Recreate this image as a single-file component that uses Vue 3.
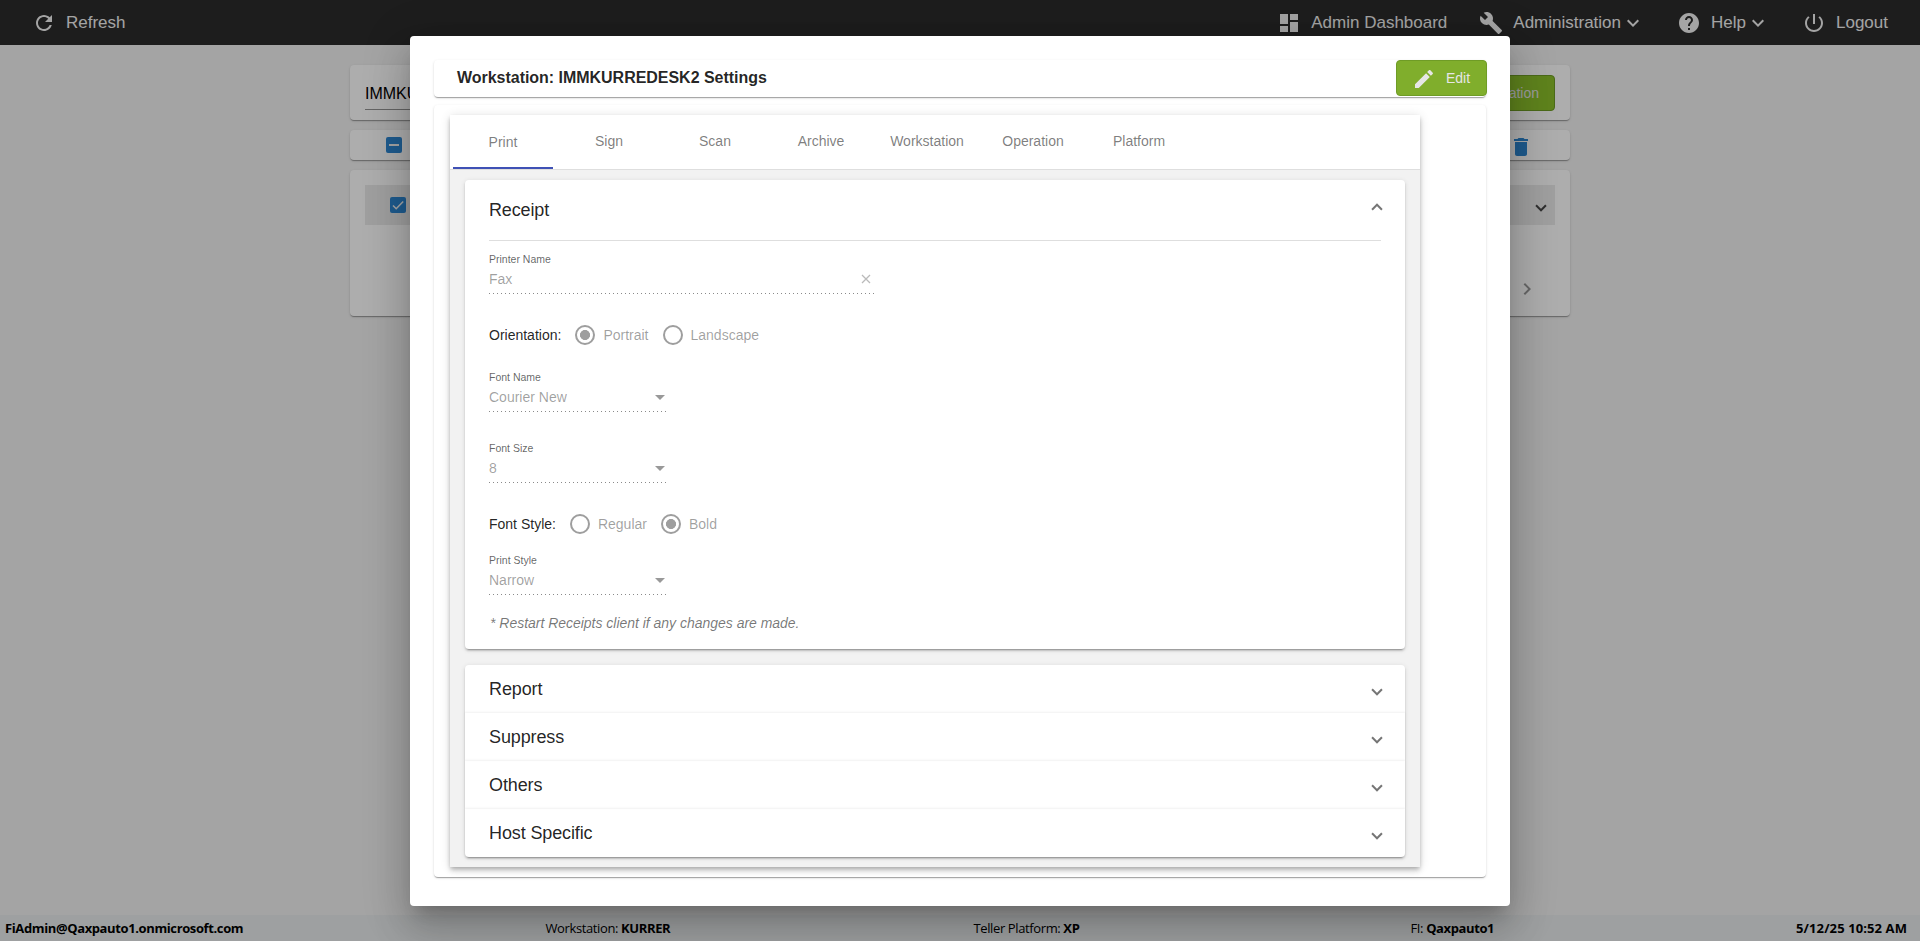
<script setup>
    import { ref } from 'vue';

    const tabs = ['Print', 'Sign', 'Scan', 'Archive', 'Workstation', 'Operation', 'Platform'];
    const activeTab = ref('Print');

    const closedPanels = ['Report', 'Suppress', 'Others', 'Host Specific'];

    const selects = {
        fontName: { label: 'Font Name', value: 'Courier New' },
        fontSize: { label: 'Font Size', value: '8' },
        printStyle: { label: 'Print Style', value: 'Narrow' },
    };

    const orientation = ref('Portrait');
    const fontStyle = ref('Bold');
</script>

<template>
    <div class="page">
        <header class="toolbar">
            <a class="nav-item">
                <svg class="icon" viewBox="0 0 24 24"><path d="M17.65 6.35C16.2 4.9 14.21 4 12 4c-4.42 0-7.99 3.58-7.99 8s3.57 8 7.99 8c3.73 0 6.84-2.55 7.73-6h-2.08c-.82 2.33-3.04 4-5.65 4-3.31 0-6-2.69-6-6s2.69-6 6-6c1.66 0 3.14.69 4.22 1.78L13 11h7V4l-2.35 2.35z" /></svg>
                <span>Refresh</span>
            </a>
            <nav class="nav-right">
                <a class="nav-item">
                    <svg class="icon" viewBox="0 0 24 24"><path d="M3 13h8V3H3v10zm0 8h8v-6H3v6zm10 0h8V11h-8v10zm0-18v6h8V3h-8z" /></svg>
                    <span>Admin Dashboard</span>
                </a>
                <a class="nav-item">
                    <svg class="icon" viewBox="0 0 24 24"><path d="M22.7 19l-9.1-9.1c.9-2.3.4-5-1.5-6.9-2-2-5-2.4-7.4-1.3L9 6 6 9 1.6 4.7C.4 7.1.9 10.1 2.9 12.1c1.9 1.9 4.6 2.4 6.9 1.5l9.1 9.1c.4.4 1 .4 1.4 0l2.3-2.3c.5-.4.5-1.1.1-1.4z" /></svg>
                    <span>Administration</span>
                    <svg class="icon more" viewBox="0 0 24 24"><path d="M16.59 8.59L12 13.17 7.41 8.59 6 10l6 6 6-6z" /></svg>
                </a>
                <a class="nav-item">
                    <svg class="icon" viewBox="0 0 24 24"><path d="M12 2C6.48 2 2 6.48 2 12s4.48 10 10 10 10-4.48 10-10S17.52 2 12 2zm1 17h-2v-2h2v2zm2.07-7.75l-.9.92C13.45 12.9 13 13.5 13 15h-2v-.5c0-1.1.45-2.1 1.17-2.83l1.24-1.26c.37-.36.59-.86.59-1.41 0-1.1-.9-2-2-2s-2 .9-2 2H8c0-2.21 1.79-4 4-4s4 1.79 4 4c0 .88-.36 1.68-.93 2.25z" /></svg>
                    <span>Help</span>
                    <svg class="icon more" viewBox="0 0 24 24"><path d="M16.59 8.59L12 13.17 7.41 8.59 6 10l6 6 6-6z" /></svg>
                </a>
                <a class="nav-item">
                    <svg class="icon" viewBox="0 0 24 24"><path d="M13 3h-2v10h2V3zm4.83 2.17l-1.42 1.42C17.99 7.86 19 9.81 19 12c0 3.87-3.13 7-7 7s-7-3.13-7-7c0-2.19 1.01-4.14 2.58-5.42L6.17 5.17C4.23 6.82 3 9.26 3 12c0 4.97 4.03 9 9 9s9-4.03 9-9c0-2.74-1.23-5.18-3.17-6.83z" /></svg>
                    <span>Logout</span>
                </a>
            </nav>
        </header>

        <main class="content">
            <div class="card search-card">
                <div class="search-input">IMMKURREDESK2</div>
                <button class="btn add-btn">Add Workstation</button>
            </div>
            <div class="card actions-card">
                <span class="checkbox">
                    <svg viewBox="0 0 16 16"><path d="M3 8h10" stroke-width="2" /></svg>
                </span>
                <svg class="icon trash" viewBox="0 0 24 24"><path d="M6 19c0 1.100.9 2 2 2h8c1.100 0 2-.9 2-2V7H6v12zM19 4h-3.500l-1-1h-5l-1 1H5v2h14V4z" /></svg>
            </div>
            <div class="card list-card">
                <div class="list-row">
                    <span class="checkbox">
                        <svg viewBox="0 0 16 16"><path d="M3 8.500l3.200 3.200L13.200 4.500" stroke-width="1.600" /></svg>
                    </span>
                    <span class="indicator dark"></span>
                </div>
                <svg class="icon next" viewBox="0 0 24 24"><path d="M10 6L8.590 7.410 13.170 12l-4.580 4.590L10 18l6-6z" /></svg>
            </div>
        </main>

        <footer class="status-bar">
            <span class="user"><b>FiAdmin@Qaxpauto1.onmicrosoft.com</b></span>
            <span class="station">Workstation: <b>KURRER</b></span>
            <span class="platform">Teller Platform: <b>XP</b></span>
            <span class="fi">FI: <b>Qaxpauto1</b></span>
            <span class="date"><b>5/12/25 10:52 AM</b></span>
        </footer>

        <div class="overlay">
            <div class="dialog" role="dialog" aria-labelledby="dialog-title">
                <div class="card title-card">
                    <h2 id="dialog-title">Workstation: IMMKURREDESK2 Settings</h2>
                    <button class="btn edit-btn">
                        <svg class="icon" viewBox="0 0 24 24"><path d="M3 17.250V21h3.750L17.810 9.940l-3.750-3.750L3 17.250zM20.710 7.040c.39-.39.39-1.020 0-1.410l-2.340-2.340c-.39-.39-1.020-.39-1.410 0l-1.830 1.830 3.750 3.750 1.830-1.830z" /></svg>
                        <span>Edit</span>
                    </button>
                </div>

                <div class="card body-card">
                    <div class="tab-group">
                        <div class="tab-header">
                            <div
                                v-for="tab in tabs"
                                :key="tab"
                                class="tab"
                                :class="{ active: tab === activeTab }"
                                @click="activeTab = tab"
                            >
                                {{ tab }}
                            </div>
                        </div>

                        <div class="tab-body">
                            <section class="panel receipt">
                                <div class="panel-title">
                                    <span>Receipt</span>
                                    <span class="indicator up"></span>
                                </div>

                                <div class="field printer">
                                    <label>Printer Name</label>
                                    <div class="value">
                                        <span>Fax</span>
                                        <svg class="clear" viewBox="0 0 10 10"><path d="M1 1l8 8M9 1L1 9" /></svg>
                                    </div>
                                </div>

                                <div class="radio-row orientation">
                                    <span class="radio-label">Orientation:</span>
                                    <span v-for="option in ['Portrait', 'Landscape']" :key="option" class="radio">
                                        <i class="circle" :class="{ checked: option === orientation }"></i>{{ option }}
                                    </span>
                                </div>

                                <div class="field font-name">
                                    <label>{{ selects.fontName.label }}</label>
                                    <div class="value"><span>{{ selects.fontName.value }}</span><i class="arrow"></i></div>
                                </div>
                                <div class="field font-size">
                                    <label>{{ selects.fontSize.label }}</label>
                                    <div class="value"><span>{{ selects.fontSize.value }}</span><i class="arrow"></i></div>
                                </div>

                                <div class="radio-row">
                                    <span class="radio-label">Font Style:</span>
                                    <span v-for="option in ['Regular', 'Bold']" :key="option" class="radio">
                                        <i class="circle" :class="{ checked: option === fontStyle }"></i>{{ option }}
                                    </span>
                                </div>

                                <div class="field print-style">
                                    <label>{{ selects.printStyle.label }}</label>
                                    <div class="value"><span>{{ selects.printStyle.value }}</span><i class="arrow"></i></div>
                                </div>

                                <p class="note">* Restart Receipts client if any changes are made.</p>
                            </section>

                            <section class="panel">
                                <div v-for="name in closedPanels" :key="name" class="closed-row">
                                    <span>{{ name }}</span>
                                    <span class="indicator"></span>
                                </div>
                            </section>
                        </div>
                    </div>
                </div>
            </div>
        </div>
    </div>
</template>

<style>
    body {
        margin: 0;
        overflow: hidden;
    }
</style>

<style scoped>
    * {
        box-sizing: border-box;
    }

    .page {
        display: flex;
        flex-direction: column;
        height: 100vh;
        background: #f2f2f2;
        font-family: "Liberation Sans", Arial, sans-serif;
        font-size: 14px;
        color: rgba(0, 0, 0, 0.87);
    }

    .icon {
        width: 24px;
        height: 24px;
        flex: none;
        fill: currentColor;
    }

    .toolbar {
        display: flex;
        justify-content: space-between;
        height: 45px;
        padding: 0 32px;
        background: #2b2b2b;
        color: #f2f2f2;
        font-size: 17px;
    }

    .nav-right {
        display: flex;
        gap: 32px;
    }

    .nav-item {
        display: flex;
        align-items: center;
        gap: 10px;
    }

    .nav-item .more {
        margin-left: -10px;
    }

    .card {
        background: #fff;
        border-radius: 4px;
        box-shadow: 0 2px 1px -1px rgba(0, 0, 0, 0.2), 0 1px 1px 0 rgba(0, 0, 0, 0.14), 0 1px 3px 0 rgba(0, 0, 0, 0.12);
    }

    .content {
        flex: 1;
        display: flex;
        flex-direction: column;
        gap: 10px;
        width: 1220px;
        margin: 0 auto;
        padding-top: 20px;
    }

    .search-card {
        display: flex;
        justify-content: space-between;
        height: 55px;
        padding: 10px 15px;
    }

    .search-input {
        width: 300px;
        height: 35px;
        padding-top: 10px;
        border-bottom: 1px solid rgba(0, 0, 0, 0.42);
        font-size: 16px;
        line-height: 18px;
        color: #000;
    }

    .btn {
        display: flex;
        align-items: center;
        height: 36px;
        border: 1px solid #6f9c26;
        border-radius: 4px;
        background: #80ae2c;
        color: #e6e6e6;
        font: 14px "Liberation Sans", Arial, sans-serif;
    }

    .add-btn {
        padding: 0 15px;
        background: #8cc22c;
    }

    .actions-card {
        display: flex;
        align-items: center;
        justify-content: space-between;
        height: 30px;
        padding: 0 37.5px 0 36px;
    }

    .trash {
        color: #2d86d2;
        margin-top: 4px;
    }

    .checkbox {
        width: 16px;
        height: 16px;
        border-radius: 2px;
        background: #2d86d2;
    }

    .checkbox svg {
        display: block;
        fill: none;
        stroke: #f2f2f2;
    }

    .list-card {
        display: flex;
        flex-direction: column;
        height: 146px;
        padding: 15px;
    }

    .list-row {
        display: flex;
        align-items: center;
        justify-content: space-between;
        height: 40px;
        padding: 0 10px 0 25px;
        margin-bottom: 52px;
        background: #ebebeb;
    }

    .next {
        align-self: flex-end;
        margin-right: 16px;
        color: rgba(0, 0, 0, 0.4);
    }

    .indicator {
        width: 8px;
        height: 8px;
        margin-top: 2px;
        border: solid rgba(0, 0, 0, 0.54);
        border-width: 0 2px 2px 0;
        transform: rotate(45deg);
    }

    .indicator.dark {
        border-color: rgba(0, 0, 0, 0.7);
    }

    .indicator.up {
        margin-top: -1px;
        transform: rotate(225deg);
    }

    .status-bar {
        display: grid;
        grid-template-columns: 540.5px 428px 437px 1fr auto;
        align-items: center;
        height: 26px;
        padding: 0 13px 0 5px;
        background: #e9ecee;
        color: #000;
        font: 13px "Open Sans", "Noto Sans", sans-serif;
        letter-spacing: -0.38px;
    }

    .status-bar .date {
        letter-spacing: 0.1px;
    }

    .overlay {
        position: absolute;
        inset: 0;
        display: flex;
        align-items: center;
        justify-content: center;
        background: rgba(0, 0, 0, 0.32);
    }

    .dialog {
        width: 1100px;
        height: 870px;
        padding: 24px;
        border-radius: 4px;
        background: #fff;
        box-shadow: 0 11px 15px -7px rgba(0, 0, 0, 0.2), 0 24px 38px 3px rgba(0, 0, 0, 0.14), 0 9px 46px 8px rgba(0, 0, 0, 0.12);
    }

    .title-card {
        display: flex;
        justify-content: space-between;
        height: 37px;
        padding-left: 23px;
        margin-bottom: 8px;
    }

    .title-card h2 {
        margin: 0;
        font-size: 16px;
        line-height: 35px;
        letter-spacing: -0.03px;
    }

    .edit-btn {
        gap: 10px;
        width: 91px;
        margin-right: -1px;
        padding: 0 15px;
    }

    .edit-btn .icon {
        margin-top: 2px;
    }

    .body-card {
        height: 772px;
        padding: 10px 16px;
    }

    .tab-group {
        width: 970px;
        height: 752px;
        background: #f2f2f2;
        box-shadow: 0 2px 4px -1px rgba(0, 0, 0, 0.2), 0 4px 5px 0 rgba(0, 0, 0, 0.14), 0 1px 10px 0 rgba(0, 0, 0, 0.12);
    }

    .tab-header {
        display: flex;
        gap: 6px;
        height: 55px;
        padding: 0 3px;
        background: #fff;
        border-bottom: 1px solid #dedede;
    }

    .tab {
        width: 100px;
        padding-bottom: 2px;
        text-align: center;
        line-height: 52px;
        color: rgba(0, 0, 0, 0.52);
    }

    .tab.active {
        padding-bottom: 0;
        line-height: 54px;
        border-bottom: 2px solid #3f51b5;
    }

    .tab-body {
        display: flex;
        flex-direction: column;
        gap: 16px;
        padding: 10px 15px;
    }

    .panel {
        background: #fff;
        border-radius: 4px;
        box-shadow: 0 3px 1px -2px rgba(0, 0, 0, 0.2), 0 2px 2px 0 rgba(0, 0, 0, 0.14), 0 1px 5px 0 rgba(0, 0, 0, 0.12);
    }

    .receipt {
        height: 469px;
        padding: 0 24px;
    }

    .panel-title {
        display: flex;
        align-items: center;
        justify-content: space-between;
        height: 61px;
        border-bottom: 1px solid #dedede;
        font-size: 18px;
        letter-spacing: -0.15px;
    }

    .panel-title span:first-child,
    .closed-row span:first-child {
        padding-top: 2px;
    }

    .field {
        width: 178px;
        height: 42px;
    }

    .field label {
        display: block;
        height: 14px;
        font-size: 10.5px;
        line-height: 14px;
        color: rgba(0, 0, 0, 0.62);
    }

    .field .value {
        display: flex;
        align-items: center;
        justify-content: space-between;
        height: 28px;
        padding: 0 2px 2px 0;
        color: rgba(0, 0, 0, 0.38);
        background: repeating-linear-gradient(to right, rgba(0, 0, 0, 0.46) 0 1px, transparent 1px 4px) bottom / 100% 1px no-repeat;
    }

    .printer {
        width: 386px;
        margin-top: 11px;
    }

    .clear {
        width: 10px;
        height: 10px;
        margin-right: 2px;
        fill: none;
        stroke: rgba(0, 0, 0, 0.27);
        stroke-width: 1.3;
    }

    .arrow {
        border: solid transparent;
        border-top-color: rgba(0, 0, 0, 0.4);
        border-width: 5px 5px 0;
        margin-top: 2px;
    }

    .radio-row {
        display: flex;
        align-items: center;
        height: 20px;
        margin-top: 31px;
    }

    .radio-label {
        margin-right: 14px;
    }

    .radio {
        display: flex;
        align-items: center;
        gap: 8px;
        margin-right: 14px;
        color: rgba(0, 0, 0, 0.38);
    }

    .circle {
        width: 20px;
        height: 20px;
        border: 2px solid #9e9e9e;
        border-radius: 50%;
    }

    .circle.checked {
        background: radial-gradient(circle, #9e9e9e 4.7px, transparent 5.3px);
    }

    .font-name {
        margin-top: 25px;
    }

    .font-size {
        margin-top: 29px;
    }

    .print-style {
        margin-top: 19px;
    }

    .note {
        margin: 19px 0 0 1px;
        font-style: italic;
        line-height: 18px;
        letter-spacing: -0.02px;
        color: rgba(0, 0, 0, 0.54);
    }

    .closed-row {
        display: flex;
        align-items: center;
        justify-content: space-between;
        height: 48px;
        padding: 0 24px;
        font-size: 18px;
        letter-spacing: -0.12px;
    }

    .closed-row .indicator {
        margin-top: 2px;
    }

    .closed-row + .closed-row {
        box-shadow: 0 -1px 2px rgba(0, 0, 0, 0.06);
    }
</style>
